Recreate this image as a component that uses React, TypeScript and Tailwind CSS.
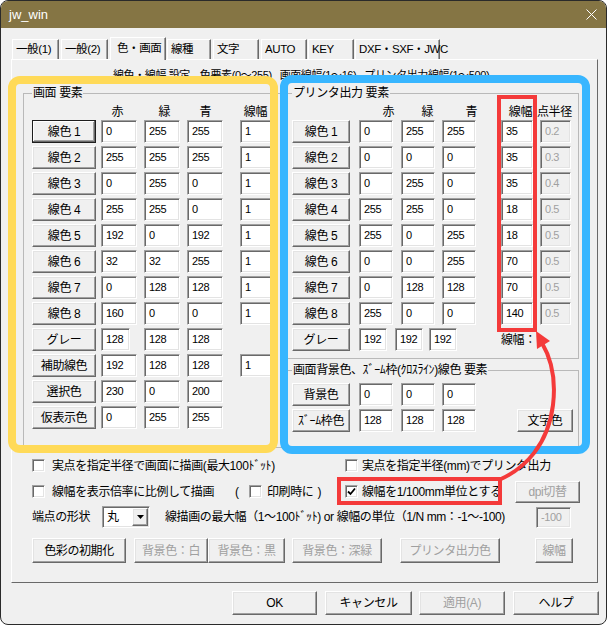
import React from "react";

const FONT = "font-['Liberation_Sans','Noto_Sans_CJK_JP',sans-serif]";

const RAISED =
  "bg-[#f0f0f0] border border-t-white border-l-white border-r-[#696969] border-b-[#696969] shadow-[inset_-1px_-1px_0_#a0a0a0,inset_1px_1px_0_#e3e3e3]";
const RAISED_FOCUS =
  "bg-[#f0f0f0] border border-[#1e1e1e] shadow-[inset_-1px_-1px_0_#696969,inset_1px_1px_0_#ffffff,inset_-2px_-2px_0_#a0a0a0]";
const SUNKEN =
  "border border-t-[#a0a0a0] border-l-[#a0a0a0] border-r-white border-b-white shadow-[inset_1px_1px_0_#696969,inset_-1px_-1px_0_#e3e3e3]";

interface BtnProps {
  children: React.ReactNode;
  className?: string;
  disabled?: boolean;
  focused?: boolean;
}

function Btn({ children, className = "", disabled = false, focused = false }: BtnProps) {
  return (
    <button
      type="button"
      className={`${focused ? RAISED_FOCUS : RAISED} shrink-0 flex items-center justify-center text-[12px] leading-none whitespace-nowrap ${
        disabled ? "text-[#a0a0a0]" : "text-black"
      } ${className}`}
    >
      {children}
    </button>
  );
}

interface FieldProps {
  value: string;
  className?: string;
  disabled?: boolean;
}

function Field({ value, className = "", disabled = false }: FieldProps) {
  return (
    <div
      className={`${SUNKEN} ${
        disabled ? "bg-[#f0f0f0] text-[#a0a0a0]" : "bg-white text-black"
      } shrink-0 h-[23px] flex items-center pl-[4px] text-[11px] ${className}`}
    >
      {value}
    </div>
  );
}

function Check({ checked = false }: { checked?: boolean }) {
  return (
    <div className={`${SUNKEN} bg-white w-[13px] h-[13px] shrink-0 flex items-center justify-center`}>
      {checked && (
        <svg width="9" height="9" viewBox="0 0 9 9">
          <path d="M1 4.5 L3.5 7 L8 1.5" fill="none" stroke="#000" strokeWidth="1.8" />
        </svg>
      )}
    </div>
  );
}

const TABS = [
  { label: "一般(1)", w: "w-[47px]", ml: "ml-0" },
  { label: "一般(2)", w: "w-[47px]", ml: "ml-[2px]" },
  { label: "色・画面", w: "w-[56px]", ml: "ml-[2px]", active: true },
  { label: "線種", w: "w-[44px]", ml: "ml-[1px]" },
  { label: "文字", w: "w-[46px]", ml: "ml-[2px]" },
  { label: "AUTO", w: "w-[46px]", ml: "ml-[2px]" },
  { label: "KEY", w: "w-[46px]", ml: "ml-[1px]" },
  { label: "DXF・SXF・JWC", w: "w-[85px]", ml: "ml-[1px]" },
];

type Row = [string, string, string, string, string | null];

const SCREEN_ROWS: Row[] = [
  ["線色 1", "0", "255", "255", "1"],
  ["線色 2", "255", "255", "255", "1"],
  ["線色 3", "0", "255", "0", "1"],
  ["線色 4", "255", "255", "0", "1"],
  ["線色 5", "192", "0", "192", "1"],
  ["線色 6", "32", "32", "255", "1"],
  ["線色 7", "0", "128", "128", "1"],
  ["線色 8", "160", "0", "0", "1"],
  ["グレー", "128", "128", "128", null],
  ["補助線色", "192", "128", "128", "1"],
  ["選択色", "230", "0", "200", null],
  ["仮表示色", "0", "255", "255", null],
];

const PRINT_ROWS: [string, string, string, string, string, string][] = [
  ["線色 1", "0", "255", "255", "35", "0.2"],
  ["線色 2", "0", "0", "0", "35", "0.3"],
  ["線色 3", "0", "255", "0", "35", "0.4"],
  ["線色 4", "255", "255", "0", "18", "0.5"],
  ["線色 5", "255", "0", "255", "18", "0.5"],
  ["線色 6", "0", "0", "255", "70", "0.5"],
  ["線色 7", "0", "128", "128", "70", "0.5"],
  ["線色 8", "255", "0", "0", "140", "0.5"],
];

function ScreenGroup() {
  return (
    <fieldset className="ml-[11px] w-[259px] h-[361px] border border-[#b9b9b9] pl-[8px] shrink-0">
      <legend className="px-[1px] text-[12px] leading-[12px]">画面 要素</legend>
      <div className="mt-[6px] h-[14px] flex text-[12px] leading-[14px] whitespace-nowrap">
        <span className="w-[91px] text-right shrink-0">赤</span>
        <span className="w-[47px] text-right shrink-0">緑</span>
        <span className="w-[41px] text-right shrink-0">青</span>
        <span className="w-[56px] text-right shrink-0">線幅</span>
      </div>
      <div className="mt-[1px] flex flex-col gap-[3px]">
        {SCREEN_ROWS.map(([label, r, g, b, w], i) => {
          const gray = label === "グレー";
          return (
            <div key={label} className="flex h-[23px]">
              <Btn focused={i === 0} className="w-[64px] h-[23px]">
                {label}
              </Btn>
              <Field value={r} className={gray ? "ml-[5px] w-[29px]" : "ml-[5px] w-[36px]"} />
              <Field value={g} className={gray ? "ml-[14px] w-[36px]" : "ml-[7px] w-[36px]"} />
              <Field value={b} className="ml-[7px] w-[36px]" />
              {w !== null && <Field value={w} className="ml-[17px] w-[36px]" />}
            </div>
          );
        })}
      </div>
    </fieldset>
  );
}

function PrintGroup() {
  return (
    <fieldset className="w-[292px] h-[272px] border border-[#b9b9b9] pl-[4px] shrink-0">
      <legend className="px-[1px] text-[12px] leading-[12px]">プリンタ出力 要素</legend>
      <div className="mt-[6px] h-[14px] flex text-[12px] leading-[14px] whitespace-nowrap">
        <span className="w-[102px] text-right shrink-0">赤</span>
        <span className="w-[39px] text-right shrink-0">緑</span>
        <span className="w-[44px] text-right shrink-0">青</span>
        <span className="w-[55px] text-right shrink-0">線幅</span>
        <span className="ml-[5px] shrink-0">点半径</span>
      </div>
      <div className="mt-[1px] flex flex-col gap-[3px]">
        {PRINT_ROWS.map(([label, r, g, b, w, dot]) => (
          <div key={label} className="flex h-[23px]">
            <Btn className="w-[58px] h-[23px]">{label}</Btn>
            <Field value={r} className="ml-[9px] w-[34px]" />
            <Field value={g} className="ml-[8px] w-[34px]" />
            <Field value={b} className="ml-[7px] w-[34px]" />
            <Field value={w} className="ml-[25px] w-[32px]" />
            <Field value={dot} disabled className="ml-[7px] w-[31px]" />
          </div>
        ))}
        <div className="flex h-[23px] items-center">
          <Btn className="w-[58px] h-[23px]">グレー</Btn>
          <Field value="192" className="ml-[9px] w-[28px]" />
          <Field value="192" className="ml-[8px] w-[28px]" />
          <Field value="192" className="ml-[6px] w-[28px]" />
          <span className="ml-[44px] text-[12px] leading-none whitespace-nowrap">線幅：</span>
        </div>
      </div>
    </fieldset>
  );
}

function BackGroup() {
  return (
    <fieldset className="mt-[5px] w-[292px] h-[84px] border border-[#b9b9b9] pl-[4px] shrink-0">
      <legend className="px-[1px] text-[12px] leading-[12px]">画面背景色、ｽﾞｰﾑ枠(ｸﾛｽﾗｲﾝ)線色 要素</legend>
      <div className="mt-[7px] flex flex-col gap-[3px]">
        <div className="flex h-[23px]">
          <Btn className="w-[58px] h-[23px]">背景色</Btn>
          <Field value="0" className="ml-[9px] w-[34px]" />
          <Field value="0" className="ml-[8px] w-[34px]" />
          <Field value="0" className="ml-[7px] w-[34px]" />
        </div>
        <div className="flex h-[23px]">
          <Btn className="w-[58px] h-[23px]">ｽﾞｰﾑ枠色</Btn>
          <Field value="128" className="ml-[9px] w-[34px]" />
          <Field value="128" className="ml-[8px] w-[34px]" />
          <Field value="128" className="ml-[7px] w-[34px]" />
          <Btn className="ml-[41px] w-[56px] h-[23px]">文字色</Btn>
        </div>
      </div>
    </fieldset>
  );
}

function Annotations() {
  return (
    <div className="absolute inset-0 pointer-events-none">
      <div className="absolute left-[8px] top-[76px] w-[270px] h-[377px] border-[8px] border-[#ffda58] rounded-[12px]" />
      <div className="absolute left-[280px] top-[75px] w-[310px] h-[379px] border-[8px] border-[#38b6ff] rounded-[12px]" />
      <div className="absolute left-[497px] top-[95px] w-[40px] h-[237px] border-[4px] border-[#f43a3a]" />
      <div className="absolute left-[337px] top-[477px] w-[165px] h-[28px] border-[4px] border-[#f43a3a]" />
      <svg className="absolute left-0 top-0" width="609" height="627" viewBox="0 0 609 627">
        <path
          d="M 501 479 C 525 468, 548 445, 553 405 C 556 380, 552 360, 542 343"
          fill="none"
          stroke="#f43a3a"
          strokeWidth="4"
          strokeLinecap="round"
        />
        <polygon points="536,331 550,341 537,349" fill="#f43a3a" />
      </svg>
    </div>
  );
}

export default function App() {
  return (
    <div className={`relative w-[609px] h-[627px] bg-white overflow-hidden text-black tracking-[-0.4px] ${FONT}`}>
      <div className="w-[607px] h-[625px] rounded-[8px] overflow-hidden border border-[#2a2a2a] bg-[#f0f0f0] flex flex-col">
        {/* title bar */}
        <div className="h-[27px] shrink-0 bg-[#857544] flex items-center justify-between pl-[8px] pr-[9px]">
          <span className="text-white text-[13px] leading-none tracking-normal">jw_win</span>
          <svg width="11" height="11" viewBox="0 0 11 11">
            <path d="M0.5 0.5 L10.5 10.5 M10.5 0.5 L0.5 10.5" stroke="#ffffff" strokeWidth="1" />
          </svg>
        </div>

        {/* tabs */}
        <div className="mt-[9px] h-[22px] flex items-end pl-[11px] shrink-0">
          {TABS.map((t) => (
            <div
              key={t.label}
              className={`${t.w} ${t.ml} ${
                t.active ? "h-[23px] -mb-[1px] relative z-10 pl-[6px] pt-[3px]" : "h-[20px] pl-[3px] pt-[2px]"
              } bg-[#f0f0f0] border-t border-l border-t-white border-l-white border-r border-r-[#696969] shadow-[inset_-1px_0_0_#a0a0a0] text-[11.5px] leading-[14px] whitespace-nowrap shrink-0`}
            >
              {t.label}
            </div>
          ))}
        </div>

        {/* tab page */}
        <div className="ml-[10px] w-[587px] h-[524px] shrink-0 border border-t-white border-l-white border-r-[#696969] border-b-[#696969] flex flex-col">
          <div className="pt-[9px] pl-[101px] h-[21px] flex text-[11px] leading-[12px] whitespace-nowrap">
            <span>線色・線幅 設定</span>
            <span className="ml-[10px]">色要素(0〜255)</span>
            <span className="ml-[8px]">画面線幅(1〜16)</span>
            <span className="ml-[8px]">プリンタ出力線幅(1〜500)</span>
          </div>
          <div className="mt-[6px] flex">
            <ScreenGroup />
            <div className="ml-[5px] flex flex-col">
              <PrintGroup />
              <BackGroup />
            </div>
          </div>

          <div className="mt-[11px] h-[13px] flex items-center pl-[20px] text-[12px] leading-none whitespace-nowrap">
            <div className="w-[313px] flex items-center gap-[7px]">
              <Check />
              <span>実点を指定半径で画面に描画(最大100ﾄﾞｯﾄ)</span>
            </div>
            <div className="flex items-center gap-[4px]">
              <Check />
              <span>実点を指定半径(mm)でプリンタ出力</span>
            </div>
          </div>

          <div className="mt-[13px] h-[13px] flex items-center pl-[20px] text-[12px] leading-none whitespace-nowrap">
            <div className="w-[203px] flex items-center gap-[7px]">
              <Check />
              <span>線幅を表示倍率に比例して描画</span>
            </div>
            <span className="w-[14px]">(</span>
            <div className="w-[96px] flex items-center">
              <Check />
              <span className="ml-[5px]">印刷時に</span>
              <span className="ml-[4px]">)</span>
            </div>
            <div className="w-[170px] flex items-center gap-[4px]">
              <Check checked />
              <span>線幅を1/100mm単位とする</span>
            </div>
            <Btn disabled className="w-[65px] h-[22px]">
              dpi切替
            </Btn>
          </div>

          <div className="mt-[8px] h-[22px] flex items-center pl-[20px] text-[12px] leading-none whitespace-nowrap">
            <span className="w-[70px]">端点の形状</span>
            <div className={`${SUNKEN} bg-white w-[48px] h-[22px] flex items-center justify-between pl-[4px] pr-[1px]`}>
              <span>丸</span>
              <div className={`${RAISED} w-[16px] h-[18px] flex items-center justify-center`}>
                <svg width="7" height="4" viewBox="0 0 7 4">
                  <path d="M0 0 H7 L3.5 4 Z" fill="#000" />
                </svg>
              </div>
            </div>
            <span className="ml-[15px] w-[371px]">
              線描画の最大幅（1〜100ﾄﾞｯﾄ) or 線幅の単位（1/N mm：-1〜-100)
            </span>
            <Field value="-100" disabled className="w-[35px] !h-[21px]" />
          </div>

          <div className="mt-[10px] h-[25px] flex pl-[20px]">
            <Btn className="w-[94px] h-[25px]">色彩の初期化</Btn>
            <Btn disabled className="ml-[8px] w-[74px] h-[25px]">
              背景色：白
            </Btn>
            <Btn disabled className="w-[77px] h-[25px]">
              背景色：黒
            </Btn>
            <Btn disabled className="ml-[7px] w-[90px] h-[25px]">
              背景色：深緑
            </Btn>
            <Btn disabled className="ml-[18px] w-[100px] h-[25px]">
              プリンタ出力色
            </Btn>
            <Btn disabled className="ml-[35px] w-[38px] h-[25px]">
              線幅
            </Btn>
          </div>
        </div>

        {/* dialog buttons */}
        <div className="mt-[8px] h-[24px] flex pl-[231px] shrink-0">
          <Btn className="w-[85px] h-[24px]">OK</Btn>
          <Btn className="ml-[8px] w-[87px] h-[24px]">キャンセル</Btn>
          <Btn disabled className="ml-[7px] w-[86px] h-[24px]">
            適用(A)
          </Btn>
          <Btn className="ml-[8px] w-[86px] h-[24px]">ヘルプ</Btn>
        </div>
      </div>
      <Annotations />
    </div>
  );
}
